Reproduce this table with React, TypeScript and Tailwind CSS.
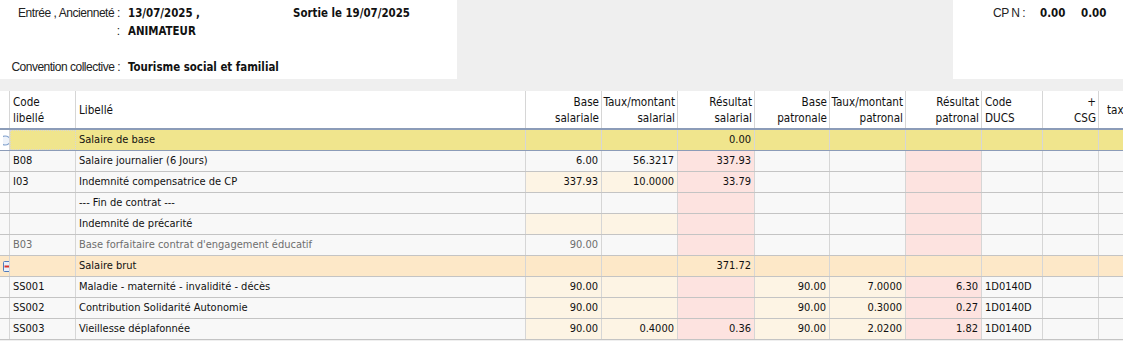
import React from 'react';

type Tone = 'w' | 'b' | 'p';

type Row = {
  ind?: 'bubble' | 'minus';
  band?: 'khaki' | 'orange';
  code: string;
  lib: string;
  muted?: boolean;
  focus?: boolean;
  cells: [string, Tone][]; // bs, ts, rs, bp, tp, rp
  ducs?: string;
};

const W: [string, Tone] = ['', 'w'];
const B: [string, Tone] = ['', 'b'];
const P: [string, Tone] = ['', 'p'];

const rows: Row[] = [
  { ind: 'bubble', band: 'khaki', focus: true, code: '', lib: 'Salaire de base', cells: [W, W, ['0.00', 'w'], W, W, W] },
  { code: 'B08', lib: 'Salaire journalier (6 Jours)', cells: [['6.00', 'w'], ['56.3217', 'w'], ['337.93', 'p'], W, W, P] },
  { code: 'I03', lib: 'Indemnité compensatrice de CP', cells: [['337.93', 'b'], ['10.0000', 'b'], ['33.79', 'p'], W, W, P] },
  { code: '', lib: '--- Fin de contrat ---', cells: [W, W, P, W, W, P] },
  { code: '', lib: 'Indemnité de précarité', cells: [B, B, P, W, W, P] },
  { code: 'B03', lib: "Base forfaitaire contrat d'engagement éducatif", muted: true, cells: [['90.00', 'w'], W, P, W, W, P] },
  { ind: 'minus', band: 'orange', code: '', lib: 'Salaire brut', cells: [W, W, ['371.72', 'w'], W, W, W] },
  { code: 'SS001', lib: 'Maladie - maternité - invalidité - décès', cells: [['90.00', 'b'], B, P, ['90.00', 'b'], ['7.0000', 'b'], ['6.30', 'p']], ducs: '1D0140D' },
  { code: 'SS002', lib: 'Contribution Solidarité Autonomie', cells: [['90.00', 'b'], B, P, ['90.00', 'b'], ['0.3000', 'b'], ['0.27', 'p']], ducs: '1D0140D' },
  { code: 'SS003', lib: 'Vieillesse déplafonnée', cells: [['90.00', 'b'], ['0.4000', 'b'], ['0.36', 'p'], ['90.00', 'b'], ['2.0200', 'b'], ['1.82', 'p']], ducs: '1D0140D' },
];

const toneBg: Record<Tone, string> = {
  w: '',
  b: 'bg-[#fdf4e4]',
  p: 'bg-[#fde3e0]',
};

const grid =
  'grid grid-cols-[10px_66px_450px_76px_76px_77px_75px_76px_76px_61px_56px_80px] w-[1179px]';

const cell = 'border-r border-[#d6d6d6] h-full px-[3px] flex items-center overflow-hidden whitespace-nowrap';

const bold = "font-['DejaVu_Sans_Condensed','DejaVu_Sans',sans-serif] font-bold text-[11.4px]";

// small row marker shown on the selected line
function Bubble() {
  return (
    <svg width="9" height="13" viewBox="0 0 9 13" className="shrink-0">
      <ellipse cx="2" cy="6.5" rx="5.5" ry="4.5" fill="#eef3fb" stroke="#7f9fcc" strokeWidth="1.2" />
    </svg>
  );
}

// collapse marker of a group line
function Minus() {
  return (
    <svg width="9" height="11" viewBox="0 0 9 11" className="shrink-0">
      <rect x="0.5" y="0.5" width="8" height="10" rx="1" fill="#eaf0f9" stroke="#4f7bbd" />
      <rect x="1.5" y="4.5" width="6" height="2" fill="#d8342b" />
    </svg>
  );
}

function HeaderCell({ lines, right, className = '' }: { lines: string[]; right?: boolean; className?: string }) {
  return (
    <div
      className={`border-r border-[#d6d6d6] h-full px-[2px] flex flex-col justify-center overflow-hidden whitespace-nowrap leading-[16px] ${
        right ? 'items-end text-right' : 'items-start'
      } ${className}`}
    >
      {lines.map((l, i) => (
        <span key={i}>{l}</span>
      ))}
    </div>
  );
}

export default function App() {
  return (
    <div className="w-[1123px] h-[341px] overflow-hidden bg-[#efefef] text-[#111]">
      {/* Top info panel */}
      <div className="flex h-[79px]">
        <div className="w-[457px] bg-white font-['Liberation_Sans',sans-serif] text-[12px]">
          <div className="grid grid-cols-[120px_1fr] gap-x-[8px] pt-[4px] leading-[18px]">
            <span className="text-right tracking-[-0.45px] text-[#222]">Entrée , Ancienneté :</span>
            <div className={`flex ${bold}`}>
              <span className="w-[165px]">13/07/2025 ,</span>
              <span>Sortie le 19/07/2025</span>
            </div>
            <span className="text-right text-[#222]">:</span>
            <span className={bold}>ANIMATEUR</span>
            <span className="text-right tracking-[-0.5px] text-[#222] mt-[18px]">Convention collective :</span>
            <span className={`${bold} mt-[18px]`}>Tourisme social et familial</span>
          </div>
        </div>
        <div className="flex-1" />
        <div className="w-[170px] bg-white pt-[4px] pl-[40px] flex leading-[18px]">
          <span className="w-[47px] font-['Liberation_Sans',sans-serif] text-[12px] tracking-[-0.5px] text-[#222]">CP N :</span>
          <span className={`w-[41px] ${bold}`}>0.00</span>
          <span className={bold}>0.00</span>
        </div>
      </div>

      <div className="h-[12px]" />

      {/* Grid */}
      <div className="font-['DejaVu_Sans_Condensed','DejaVu_Sans',sans-serif] text-[11px]">
        <div className={`${grid} h-[39px] bg-white border-b-2 border-[#8c9cb8] text-[11.6px]`}>
          <HeaderCell lines={['']} />
          <HeaderCell lines={['Code', 'libellé']} className="pl-[3px]" />
          <HeaderCell lines={['Libellé']} className="pl-[3px]" />
          <HeaderCell lines={['Base', 'salariale']} right />
          <HeaderCell lines={['Taux/montant', 'salarial']} right />
          <HeaderCell lines={['Résultat', 'salarial']} right />
          <HeaderCell lines={['Base', 'patronale']} right />
          <HeaderCell lines={['Taux/montant', 'patronal']} right />
          <HeaderCell lines={['Résultat', 'patronal']} right />
          <HeaderCell lines={['Code', 'DUCS']} className="pl-[3px]" />
          <HeaderCell lines={['+', 'CSG']} right />
          <HeaderCell lines={['', 'taxe']} className="pl-[8px]" />
        </div>

        {rows.map((r, i) => {
          const bandBg = r.band === 'khaki' ? 'bg-[#f0e58d]' : r.band === 'orange' ? 'bg-[#fde8c8]' : 'bg-[#f8f8f8]';
          const bottom = r.band === 'khaki' ? 'border-[#8c9cb8]' : 'border-[#c4c4c4]';
          const txt = r.muted ? 'text-[#6e6e6e]' : '';
          return (
            <div key={i} className={`${grid} h-[21px] border-b ${bottom} ${bandBg} ${txt}`}>
              <div className={`${cell} px-0 ${r.band === 'khaki' ? 'bg-white' : ''}`}>
                {r.ind === 'bubble' && <Bubble />}
                {r.ind === 'minus' && <Minus />}
              </div>
              <div className={`${cell} ${r.focus ? 'border border-dotted border-[#555]' : ''}`}>{r.code}</div>
              <div className={cell}>{r.lib}</div>
              {r.cells.map(([v, t], j) => (
                <div key={j} className={`${cell} justify-end ${toneBg[t]}`}>
                  {v}
                </div>
              ))}
              <div className={cell}>{r.ducs}</div>
              <div className={cell} />
              <div className={cell} />
            </div>
          );
        })}
      </div>
    </div>
  );
}
